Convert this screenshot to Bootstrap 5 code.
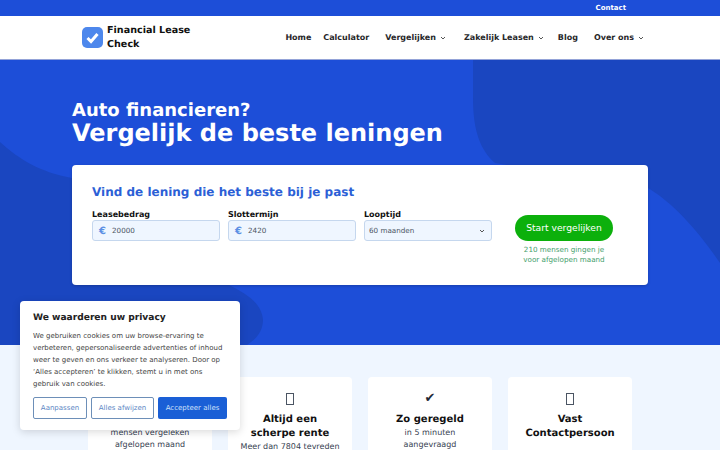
<!DOCTYPE html>
<html lang="nl">
<head>
<meta charset="utf-8">
<title>Financial Lease Check</title>
<link href="https://cdn.jsdelivr.net/npm/bootstrap@5.3.0/dist/css/bootstrap.min.css" rel="stylesheet">
<style>
html,body{height:450px;overflow:hidden}
body{font-family:"DejaVu Sans",sans-serif;background:#eff6ff;color:#111827;text-rendering:geometricPrecision}
.topstrip{height:16px;background:#1d4ed8}
.topstrip a{font-size:7px;font-weight:700;color:#fff;text-decoration:none;line-height:16px;margin-right:94px}
.mainbar{height:44px;background:#fff;border-bottom:1px solid #94a3d8;padding:0 76px 0 82px}
.brandmark{width:21px;height:21px;flex:none}
.brandname{font-size:9.6px;font-weight:700;line-height:14px;color:#111;width:100px;margin:1px 0 0 4px}
.menulink{font-size:8px;font-weight:700;color:#27272a;text-decoration:none;white-space:nowrap}
.menugrid{gap:16px;padding-top:1px}
.menuhome{margin-right:-4px}
.menuwide{margin-right:2px}
.menuzak{margin-right:-2px}
.chev{width:6px;height:6px;margin-left:4px}
.herozone{height:284.5px;background:#1d4ed8;position:relative;overflow:hidden;padding:41px 72px 0}
.heroart{position:absolute;left:0;top:0;width:720px;height:285px}
.heroinner{position:relative}
.herosub{font-size:18px;font-weight:700;color:#fff;line-height:20px;margin:0}
.herotitle{font-size:24px;font-weight:700;color:#fff;line-height:24px;margin:0 0 19.5px}
.searchpanel{background:#fff;border-radius:4px;height:120px;padding:20px;box-shadow:0 1px 3px rgba(0,0,0,.2)}
.searchtitle{font-size:12px;font-weight:700;color:#2c5fd6;line-height:15px;margin:0 0 9px}
.fieldcol{width:128px}
.fieldlabel{font-size:8px;font-weight:700;color:#111;line-height:12px;margin:0 0 -1px;display:block}
.fieldbox{height:21px;border:1px solid #c5d7ee;border-radius:3px;background:#eff6ff;font-size:7.2px;color:#4b5563;padding:2px 6px 0}
.euro{color:#5b8fe4;font-size:10px;font-weight:700;width:13px}
.startcol{margin-left:15px;width:98px;margin-top:5.5px}
.startbtn{background:#0cb00c;border:0;color:#fff;font-size:9.2px;border-radius:13px;height:26px;width:98px;padding:0;white-space:nowrap}
.startnote{font-size:7.2px;line-height:10px;color:#3f9e6b;text-align:center;margin:4px 0 0;white-space:nowrap}
.perkzone{position:relative;padding:32px 88px 0}
.perkcard{width:124px;height:120px;flex:none;background:#fff;border-radius:4px;text-align:center;padding:10px 12px}
.perkicon{height:23px;font-size:13px;line-height:23px;color:#1f2937}
.missingglyph{width:8px;height:12px;border:1px solid #4b5563;margin-top:6px}
.perkhead{font-size:10px;font-weight:700;line-height:14px;color:#111;margin:3.5px 0 0}
.perktext{font-size:8px;line-height:12px;color:#374151;margin:0}
.cookiebox{position:absolute;left:20px;top:301px;width:220px;height:129px;background:#fff;border-radius:4px;box-shadow:0 2px 8px rgba(0,0,0,.15);padding:10px 13px}
.cookiehead{font-size:9.1px;font-weight:700;color:#222;line-height:14px;margin:0 0 5px}
.cookietext{font-size:7px;line-height:12px;color:#444;margin:0 0 7px;white-space:nowrap}
.cookiebtn{height:22px;font-size:7px;border-radius:2px;padding:0;white-space:nowrap}
.cookieline{background:#fff;border:1.5px solid #6d8fb8;color:#5c86c4}
.cookiefill{background:#1a5fd6;border:0;color:#cfe0fa}
.cookie-a{width:54px}
.cookie-b{width:63px}
.cookie-c{width:69px}
</style>
</head>
<body>
<div class="topstrip d-flex justify-content-end"><a href="#">Contact</a></div>
<nav class="mainbar d-flex align-items-center justify-content-between">
  <a href="#" class="d-flex align-items-center text-decoration-none">
    <svg class="brandmark" viewBox="0 0 21 21"><rect width="21" height="21" rx="5" fill="#4d87ec"/><path d="M5.5 11l3.5 3.5L15.5 7" fill="none" stroke="#fff" stroke-width="3"/></svg>
    <span class="brandname">Financial Lease Check</span>
  </a>
  <div class="d-flex align-items-center menugrid">
    <a class="menulink menuhome" href="#">Home</a>
    <a class="menulink" href="#">Calculator</a>
    <a class="menulink menuwide" href="#">Vergelijken<svg class="chev" viewBox="0 0 6 6"><path d="M1 2l2 2 2-2" fill="none" stroke="#555"/></svg></a>
    <a class="menulink menuzak" href="#">Zakelijk Leasen<svg class="chev" viewBox="0 0 6 6"><path d="M1 2l2 2 2-2" fill="none" stroke="#555"/></svg></a>
    <a class="menulink" href="#">Blog</a>
    <a class="menulink" href="#">Over ons<svg class="chev" viewBox="0 0 6 6"><path d="M1 2l2 2 2-2" fill="none" stroke="#555"/></svg></a>
  </div>
</nav>
<section class="herozone">
  <svg class="heroart" viewBox="0 0 720 285">
    <path fill="#1a46c0" d="M473 0V38C473 70 480 90 495 103L648 128C668 140 692 162 720 203V0Z"/>
    <path fill="#1a46c0" d="M0 82C20 100 40 112 72 118L227 224C250 235 262 245 263 260C263 272 255 280 247 285H0Z"/>
  </svg>
  <div class="heroinner">
    <h2 class="herosub">Auto financieren?</h2>
    <h1 class="herotitle">Vergelijk de beste leningen</h1>
    <div class="searchpanel">
      <h3 class="searchtitle">Vind de lening die het beste bij je past</h3>
      <div class="d-flex gap-2 align-items-start">
        <div class="fieldcol"><label class="fieldlabel">Leasebedrag</label><div class="fieldbox d-flex align-items-center"><span class="euro">€</span>20000</div></div>
        <div class="fieldcol"><label class="fieldlabel">Slottermijn</label><div class="fieldbox d-flex align-items-center"><span class="euro">€</span>2420</div></div>
        <div class="fieldcol"><label class="fieldlabel">Looptijd</label><div class="fieldbox d-flex align-items-center justify-content-between ps-1">60 maanden<svg class="chev" viewBox="0 0 6 6"><path d="M1 2l2 2 2-2" fill="none" stroke="#555"/></svg></div></div>
        <div class="startcol"><button class="startbtn">Start vergelijken</button><p class="startnote">210 mensen gingen je<br>voor afgelopen maand</p></div>
      </div>
    </div>
  </div>
</section>
<section class="perkzone d-flex gap-3">
  <div class="perkcard"><div class="perkicon d-flex justify-content-center"><span class="missingglyph"></span></div><p class="perkhead">&nbsp;</p><p class="perktext">mensen vergeleken afgelopen maand</p></div>
  <div class="perkcard"><div class="perkicon d-flex justify-content-center"><span class="missingglyph"></span></div><p class="perkhead">Altijd een scherpe rente</p><p class="perktext">Meer dan 7804 tevreden</p></div>
  <div class="perkcard"><div class="perkicon">&#10004;</div><p class="perkhead">Zo geregeld</p><p class="perktext">in 5 minuten<br>aangevraagd</p></div>
  <div class="perkcard"><div class="perkicon d-flex justify-content-center"><span class="missingglyph"></span></div><p class="perkhead">Vast Contactpersoon</p></div>
</section>
<aside class="cookiebox">
  <h4 class="cookiehead">We waarderen uw privacy</h4>
  <p class="cookietext">We gebruiken cookies om uw browse-ervaring te<br>verbeteren, gepersonaliseerde advertenties of inhoud<br>weer te geven en ons verkeer te analyseren. Door op<br>‘Alles accepteren’ te klikken, stemt u in met ons<br>gebruik van cookies.</p>
  <div class="d-flex gap-1">
    <button class="cookiebtn cookieline cookie-a">Aanpassen</button>
    <button class="cookiebtn cookieline cookie-b">Alles afwijzen</button>
    <button class="cookiebtn cookiefill cookie-c">Accepteer alles</button>
  </div>
</aside>
<script src="https://cdn.jsdelivr.net/npm/bootstrap@5.3.0/dist/js/bootstrap.bundle.min.js"></script>
</body>
</html>
